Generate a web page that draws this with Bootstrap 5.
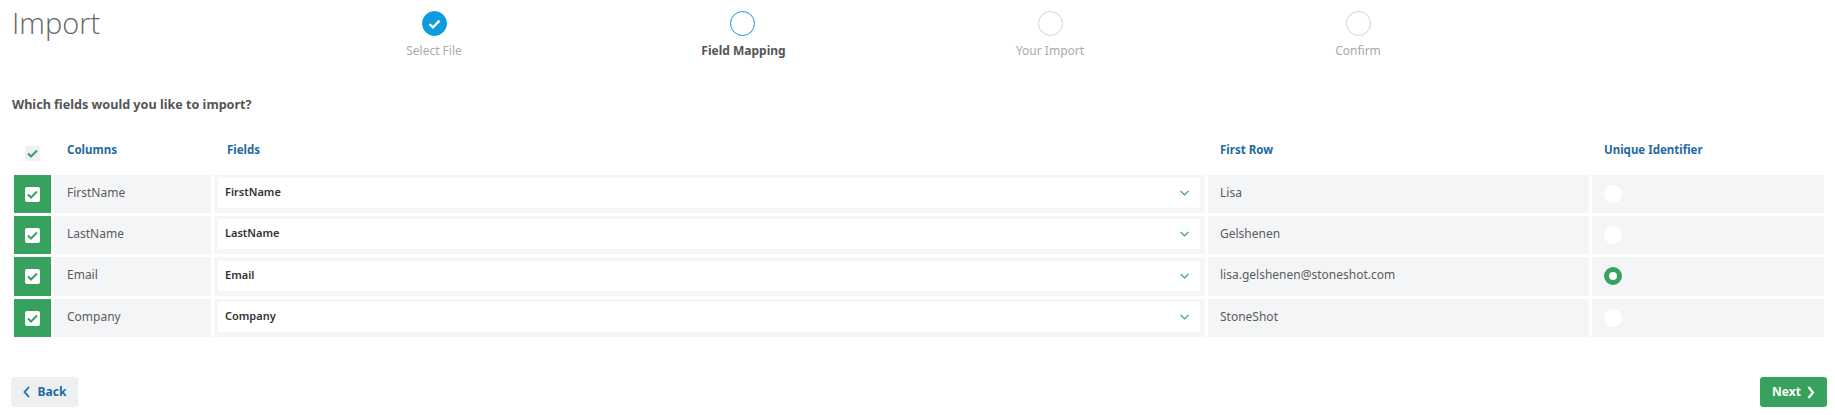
<!DOCTYPE html>
<html lang="en">
<head>
  <meta charset="UTF-8">
  <title>Import</title>
  <link href="https://cdn.jsdelivr.net/npm/bootstrap@5.3.3/dist/css/bootstrap.min.css" rel="stylesheet">
  <style>
    body {
      font-family: "Noto Sans", "Open Sans", sans-serif;
      font-size: 12px;
      color: #555;
      background: #fff;
    }
    .page-wrap { padding: 0 8px 0 12px; }

    .top-bar { height: 68px; }
    .page-title {
      width: 268px;
      font-family: "Open Sans", sans-serif;
      font-weight: 300;
      font-size: 29px;
      line-height: 38px;
      margin: 4px 0 0;
      color: #666;
    }
    .step-item { width: 308px; padding-top: 11px; color: #aaa; }
    .step-dot {
      width: 25px;
      height: 25px;
      border: 1px solid #d4d4d4;
      border-radius: 50%;
      margin-bottom: 6px;
    }
    .step-item.is-done .step-dot { background: #0f9cde; border-color: #0f9cde; }
    .step-item.is-active .step-dot { border-color: #0f9cde; }
    .step-item.is-active { color: #555; font-weight: 700; }
    .step-item.is-active span { margin-left: 3px; }

    .lead-question { font-weight: 700; font-size: 12.6px; line-height: 18px; margin: 28px 0 0; color: #555; }

    .map-grid {
      display: grid;
      grid-template-columns: 37px 157px 991px 381px 232px;
      grid-template-rows: 38px 38px 38px 39px 38px;
      gap: 3px;
      margin: 20px 0 0 2px;
    }
    .head-cell { color: #1f6a9e; font-weight: 700; font-size: 11.5px; padding: 7px 0 0 13px; }
    .head-shift { padding-left: 12px; }
    .head-check { padding-top: 12px; padding-left: 11px; }
    .body-cell { background: #f3f5f7; padding: 9px 0 0 13px; line-height: 18px; color: #5c5c5c; }
    .text-shift { padding-left: 12px; }
    .check-cell { background: #37a25e; padding: 12px 0 0 11px; }
    .field-cell { background: #f5f6f8; padding: 3px 5px 5px 4px; }
    .unique-cell { padding: 10px 0 0 12px; }

    .map-check {
      width: 15px;
      height: 15px;
      border-radius: 2px;
      background: #fff;
    }
    .head-check .map-check { background: #eef0f3; }
    .map-check svg { width: 11px; height: 9px; }

    .field-select.form-select {
      height: 30px;
      padding: 0 30px 2px 7px;
      border: 0;
      border-radius: 0;
      font-size: 11px;
      font-weight: 600;
      color: #333;
      background-position: right 11px center;
      background-size: 9px 6px;
      background-image: url("data:image/svg+xml,%3csvg xmlns='http://www.w3.org/2000/svg' viewBox='0 0 9 6'%3e%3cpath fill='none' stroke='%2337a25e' stroke-width='1.2' d='M.5.8l4 4 4-4'/%3e%3c/svg%3e");
    }
    .unique-radio.form-check-input {
      width: 18px;
      height: 18px;
      margin: 0;
      border: 0;
      background: #fff;
    }
    .unique-radio.form-check-input:checked {
      background: #fff;
      border: 5px solid #37a25e;
    }

    .btn-back, .btn-next {
      height: 30px;
      width: 67px;
      padding: 0;
      border: 0;
      border-radius: 3px;
      font-size: 12px;
      font-weight: 700;
    }
    .btn-back { background: #edf0f3; color: #1f6a9e; }
    .btn-next { background: #37a25e; color: #fff; gap: 6px; }
    .foot-bar { margin: 40px 0 0 -1px; }
  </style>
</head>
<body>
  <div class="page-wrap">
    <div class="top-bar d-flex align-items-start">
      <h1 class="page-title">Import</h1>
      <div class="step-item is-done d-flex flex-column align-items-center">
        <div class="step-dot d-flex align-items-center justify-content-center">
          <svg width="13" height="10" viewBox="0 0 13 10"><path fill="none" stroke="#fff" stroke-width="2.4" d="M1.500 5l3.500 3.300 6.500-6.600"/></svg>
        </div>
        <span>Select File</span>
      </div>
      <div class="step-item is-active d-flex flex-column align-items-center">
        <div class="step-dot"></div>
        <span>Field Mapping</span>
      </div>
      <div class="step-item d-flex flex-column align-items-center">
        <div class="step-dot"></div>
        <span>Your Import</span>
      </div>
      <div class="step-item d-flex flex-column align-items-center">
        <div class="step-dot"></div>
        <span>Confirm</span>
      </div>
    </div>

    <p class="lead-question">Which fields would you like to import?</p>

    <div class="map-grid">
      <div class="head-cell head-check"><div class="map-check d-flex align-items-center justify-content-center"><svg viewBox="0 0 11 9"><path fill="none" stroke="#37a25e" stroke-width="2" d="M1 4.500l3 3 6-6"/></svg></div></div>
      <div class="head-cell">Columns</div>
      <div class="head-cell">Fields</div>
      <div class="head-cell head-shift">First Row</div>
      <div class="head-cell head-shift">Unique Identifier</div>

      <div class="check-cell"><div class="map-check d-flex align-items-center justify-content-center"><svg viewBox="0 0 11 9"><path fill="none" stroke="#37a25e" stroke-width="2" d="M1 4.500l3 3 6-6"/></svg></div></div>
      <div class="body-cell">FirstName</div>
      <div class="field-cell"><select class="form-select field-select"><option>FirstName</option></select></div>
      <div class="body-cell text-shift">Lisa</div>
      <div class="body-cell unique-cell"><input class="form-check-input unique-radio d-block" type="radio" name="uid"></div>

      <div class="check-cell"><div class="map-check d-flex align-items-center justify-content-center"><svg viewBox="0 0 11 9"><path fill="none" stroke="#37a25e" stroke-width="2" d="M1 4.500l3 3 6-6"/></svg></div></div>
      <div class="body-cell">LastName</div>
      <div class="field-cell"><select class="form-select field-select"><option>LastName</option></select></div>
      <div class="body-cell text-shift">Gelshenen</div>
      <div class="body-cell unique-cell"><input class="form-check-input unique-radio d-block" type="radio" name="uid"></div>

      <div class="check-cell"><div class="map-check d-flex align-items-center justify-content-center"><svg viewBox="0 0 11 9"><path fill="none" stroke="#37a25e" stroke-width="2" d="M1 4.500l3 3 6-6"/></svg></div></div>
      <div class="body-cell">Email</div>
      <div class="field-cell pt-1"><select class="form-select field-select"><option>Email</option></select></div>
      <div class="body-cell text-shift">lisa.gelshenen@stoneshot.com</div>
      <div class="body-cell unique-cell"><input class="form-check-input unique-radio d-block" type="radio" name="uid" checked></div>

      <div class="check-cell"><div class="map-check d-flex align-items-center justify-content-center"><svg viewBox="0 0 11 9"><path fill="none" stroke="#37a25e" stroke-width="2" d="M1 4.500l3 3 6-6"/></svg></div></div>
      <div class="body-cell">Company</div>
      <div class="field-cell"><select class="form-select field-select"><option>Company</option></select></div>
      <div class="body-cell text-shift">StoneShot</div>
      <div class="body-cell unique-cell"><input class="form-check-input unique-radio d-block" type="radio" name="uid"></div>
    </div>

    <div class="foot-bar d-flex justify-content-between">
      <button type="button" class="btn btn-back d-flex align-items-center justify-content-center gap-2">
        <svg width="7" height="12" viewBox="0 0 7 12"><path fill="none" stroke="#1f6a9e" stroke-width="1.8" d="M6 1L1.500 6 6 11"/></svg>Back
      </button>
      <button type="button" class="btn btn-next d-flex align-items-center justify-content-center">
        Next<svg width="8" height="13" viewBox="0 0 8 13"><path fill="none" stroke="#fff" stroke-width="2.2" d="M1.500 1l4.500 5.500-4.500 5.500"/></svg>
      </button>
    </div>
  </div>

  <script src="https://cdn.jsdelivr.net/npm/bootstrap@5.3.3/dist/js/bootstrap.bundle.min.js"></script>
</body>
</html>
